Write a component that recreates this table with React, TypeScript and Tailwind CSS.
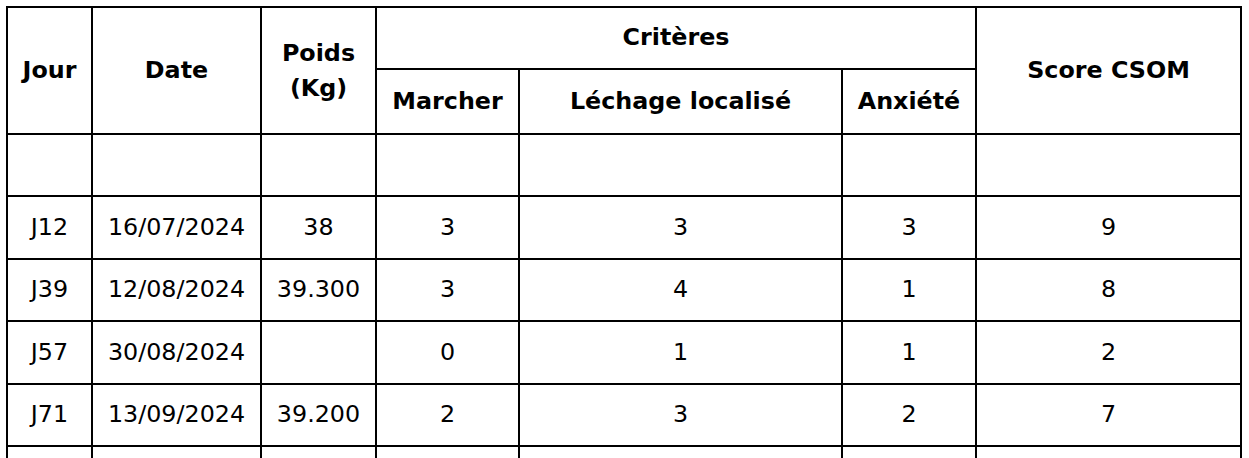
const cols = "grid-cols-[85px_169px_115px_143px_323px_134px_265px]";
const rows = "grid-rows-[62px_65px_62px_63px_62px_63px_62px_62px]";

const cell = "flex items-center justify-center border-r-2 border-b-2 border-black text-center";
const head = `${cell} font-bold`;

const data = [
  ["J12", "16/07/2024", "38", "3", "3", "3", "9"],
  ["J39", "12/08/2024", "39.300", "3", "4", "1", "8"],
  ["J57", "30/08/2024", "", "0", "1", "1", "2"],
  ["J71", "13/09/2024", "39.200", "2", "3", "2", "7"],
];

export default function App() {
  return (
    <div className="h-[458px] w-[1249px] overflow-hidden bg-white pl-[6px] pt-[6px]">
      <div
        className={`grid w-max ${cols} ${rows} border-l-2 border-t-2 border-black text-[23.8px] leading-none text-black`}
        style={{ fontFamily: '"DejaVu Sans", sans-serif' }}
      >
        <div className={`${head} row-span-2`}>Jour</div>
        <div className={`${head} row-span-2`}>Date</div>
        <div className={`${head} row-span-2 flex-col leading-[35px]`}>
          <span>Poids</span>
          <span>(Kg)</span>
        </div>
        <div className={`${head} col-span-3`}>Critères</div>
        <div className={`${head} row-span-2`}>Score CSOM</div>
        <div className={head}>Marcher</div>
        <div className={head}>Léchage localisé</div>
        <div className={head}>Anxiété</div>

        {/* ligne vide sous l'en-tête */}
        {Array.from({ length: 7 }).map((_, i) => (
          <div key={`e${i}`} className={cell} />
        ))}

        {data.map((row) =>
          row.map((v, i) => (
            <div key={`${row[0]}-${i}`} className={cell}>
              {v}
            </div>
          )),
        )}

        {Array.from({ length: 7 }).map((_, i) => (
          <div key={`f${i}`} className={cell} />
        ))}
      </div>
    </div>
  );
}
